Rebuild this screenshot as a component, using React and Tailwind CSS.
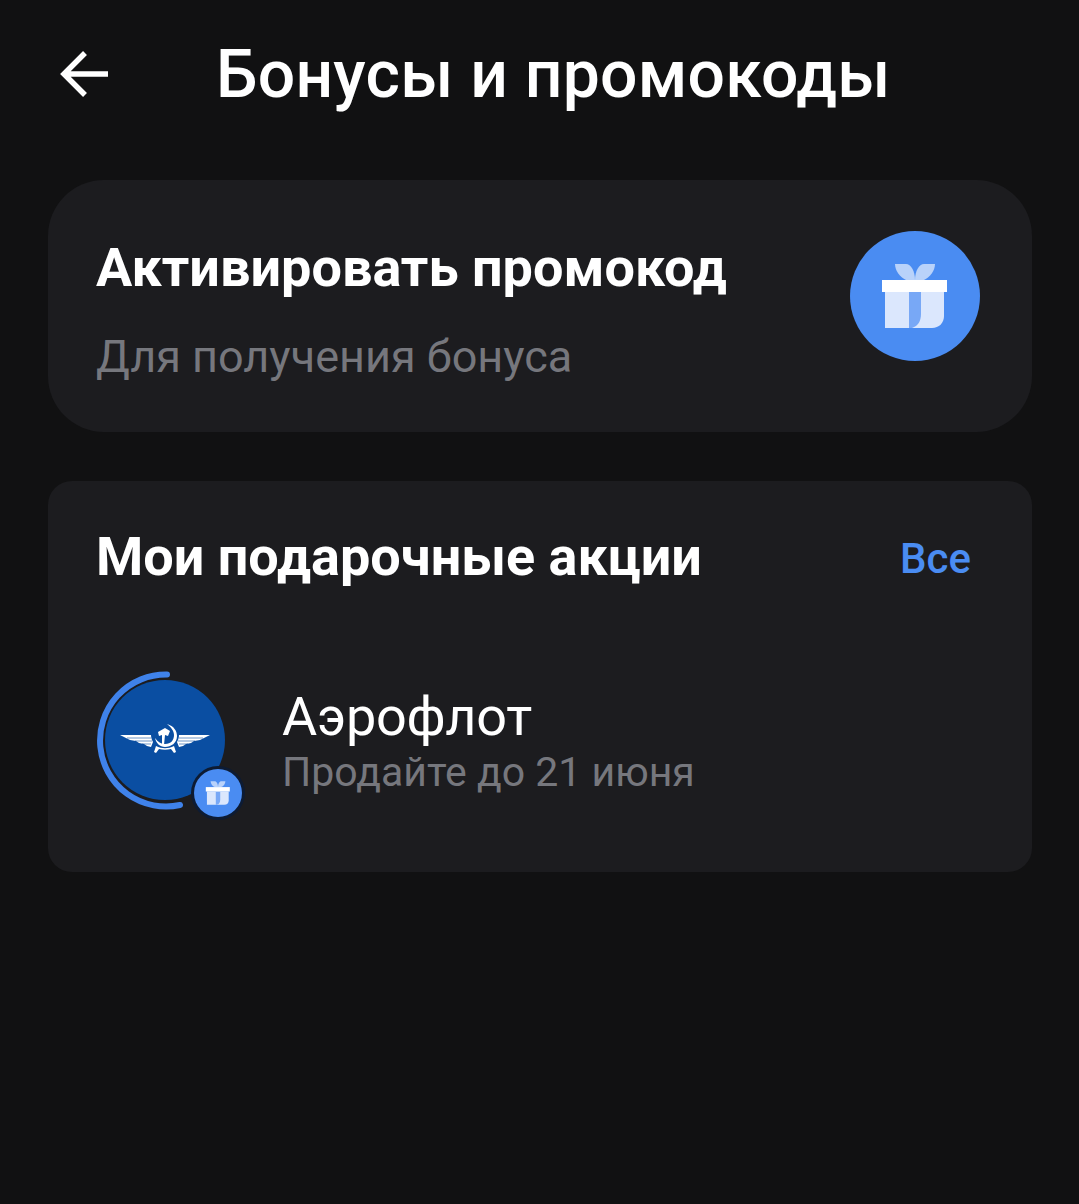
const font = { fontFamily: "Roboto, sans-serif" };

const GiftIcon = ({ className }) => (
  <svg viewBox="0 0 130 130" className={className}>
    <circle cx="65" cy="65" r="65" fill="#4a8cf2" />
    <path d="M45 33h11c5 0 9 7 9 16H56c-6-3-11-9-11-16z" fill="#b9d2fa" />
    <path d="M85 33H74c-5 0-9 7-9 16h9c6-3 11-9 11-16z" fill="#b9d2fa" />
    <path d="M35 61h59v24c0 7-5 12-12 12H35z" fill="#dbe7fd" />
    <path d="M59 61h12v22c0 7-3 12-9 14h-3z" fill="#78a8f6" />
    <rect x="32" y="49" width="65" height="12" fill="#ffffff" />
  </svg>
);

const AeroflotLogo = () => (
  <svg viewBox="0 0 120 120" className="h-full w-full">
    <circle cx="60" cy="60" r="60" fill="#0a4ea2" />
    <g fill="#ffffff">
      <path d="M15 55h31c0 3 1 5 2 7l-2 5-4-1-3-2-5-1-3-2-6-1-4-2z" />
      <path d="M105 55H74c0 3-1 5-2 7l2 5 4-1 3-2 5-1 3-2 6-1 4-2z" />
      <path d="M53 52l7-4 5 3-2 5-3-1-1 10h-2l0-10-3 1z" />
      <path d="M62 44c7 2 10 7 10 12 0 7-6 11-12 11-5 0-9-4-10-9 3 4 6 6 10 6 6 0 9-4 9-9 0-4-3-8-7-11z" />
      <path d="M51 66l-2 6 2 1 3-4c4 1 8 1 12 0l3 4 2-1-2-6c-6 3-12 3-18 0z" />
    </g>
    <g stroke="#0a4ea2" strokeWidth="0.6">
      <path d="M22 58h24M30 61h17M37 64h9" />
      <path d="M98 58H74M90 61H73M83 64H74" />
    </g>
  </svg>
);

export default function App() {
  return (
    <div className="min-h-[1204px] bg-[#111112] pl-12 pr-[47px] text-white" style={font}>
      <header className="flex h-[150px] items-center">
        <svg viewBox="0 0 48 48" className="ml-3 mt-[-2px] h-12 w-12" fill="none" stroke="#fff" strokeWidth="5.5">
          <path d="M25 3L4 24l21 21M4 24h44" />
        </svg>
        <h1 className="ml-[108px] text-[66px] leading-none font-medium tracking-[0.25px]">Бонусы и промокоды</h1>
      </header>

      <section className="mt-[30px] flex h-[252px] items-start justify-between rounded-[56px] bg-[#1c1c1f] pl-12 pr-[52px] pt-[51px]">
        <div className="mt-[7px]">
          <h2 className="text-[54px] leading-[60px] font-bold">Активировать промокод</h2>
          <p className="mt-[34px] text-[45px] leading-[50px] text-[#76777d]">Для получения бонуса</p>
        </div>
        <GiftIcon className="h-[130px] w-[130px]" />
      </section>

      <section className="mt-[49px] h-[391px] rounded-3xl bg-[#1c1c1f] pl-12 pr-[61px]">
        <div className="flex items-center justify-between pt-[46px]">
          <h2 className="text-[54px] leading-[60px] font-bold">Мои подарочные акции</h2>
          <span className="mt-[4px] text-[42px] leading-[50px] font-medium text-[#4a8cf2]">Все</span>
        </div>

        <div className="mt-[83px] flex items-center">
          <div className="relative h-[150px] w-[150px] shrink-0">
            <svg viewBox="0 0 150 150" className="absolute inset-0 h-full w-full" fill="none">
              <path d="M71 4.5A66 66 0 1 0 84 135" stroke="#3f82ea" strokeWidth="6" strokeLinecap="round" />
            </svg>
            <div className="absolute left-[9px] top-[10px] h-[120px] w-[120px]">
              <AeroflotLogo />
            </div>
            <div className="absolute left-[95px] top-[96px] h-[54px] w-[54px] rounded-full bg-[#0d1b33] p-[3px]">
              <GiftIcon className="h-full w-full" />
            </div>
          </div>
          <div className="ml-[36px] mt-[-6px]">
            <p className="text-[54px] leading-[58px] tracking-[-0.2px] text-white">Аэрофлот</p>
            <p className="mt-[2px] text-[41px] leading-[48px] text-[#76777d]">Продайте до 21 июня</p>
          </div>
        </div>
      </section>
    </div>
  );
}
